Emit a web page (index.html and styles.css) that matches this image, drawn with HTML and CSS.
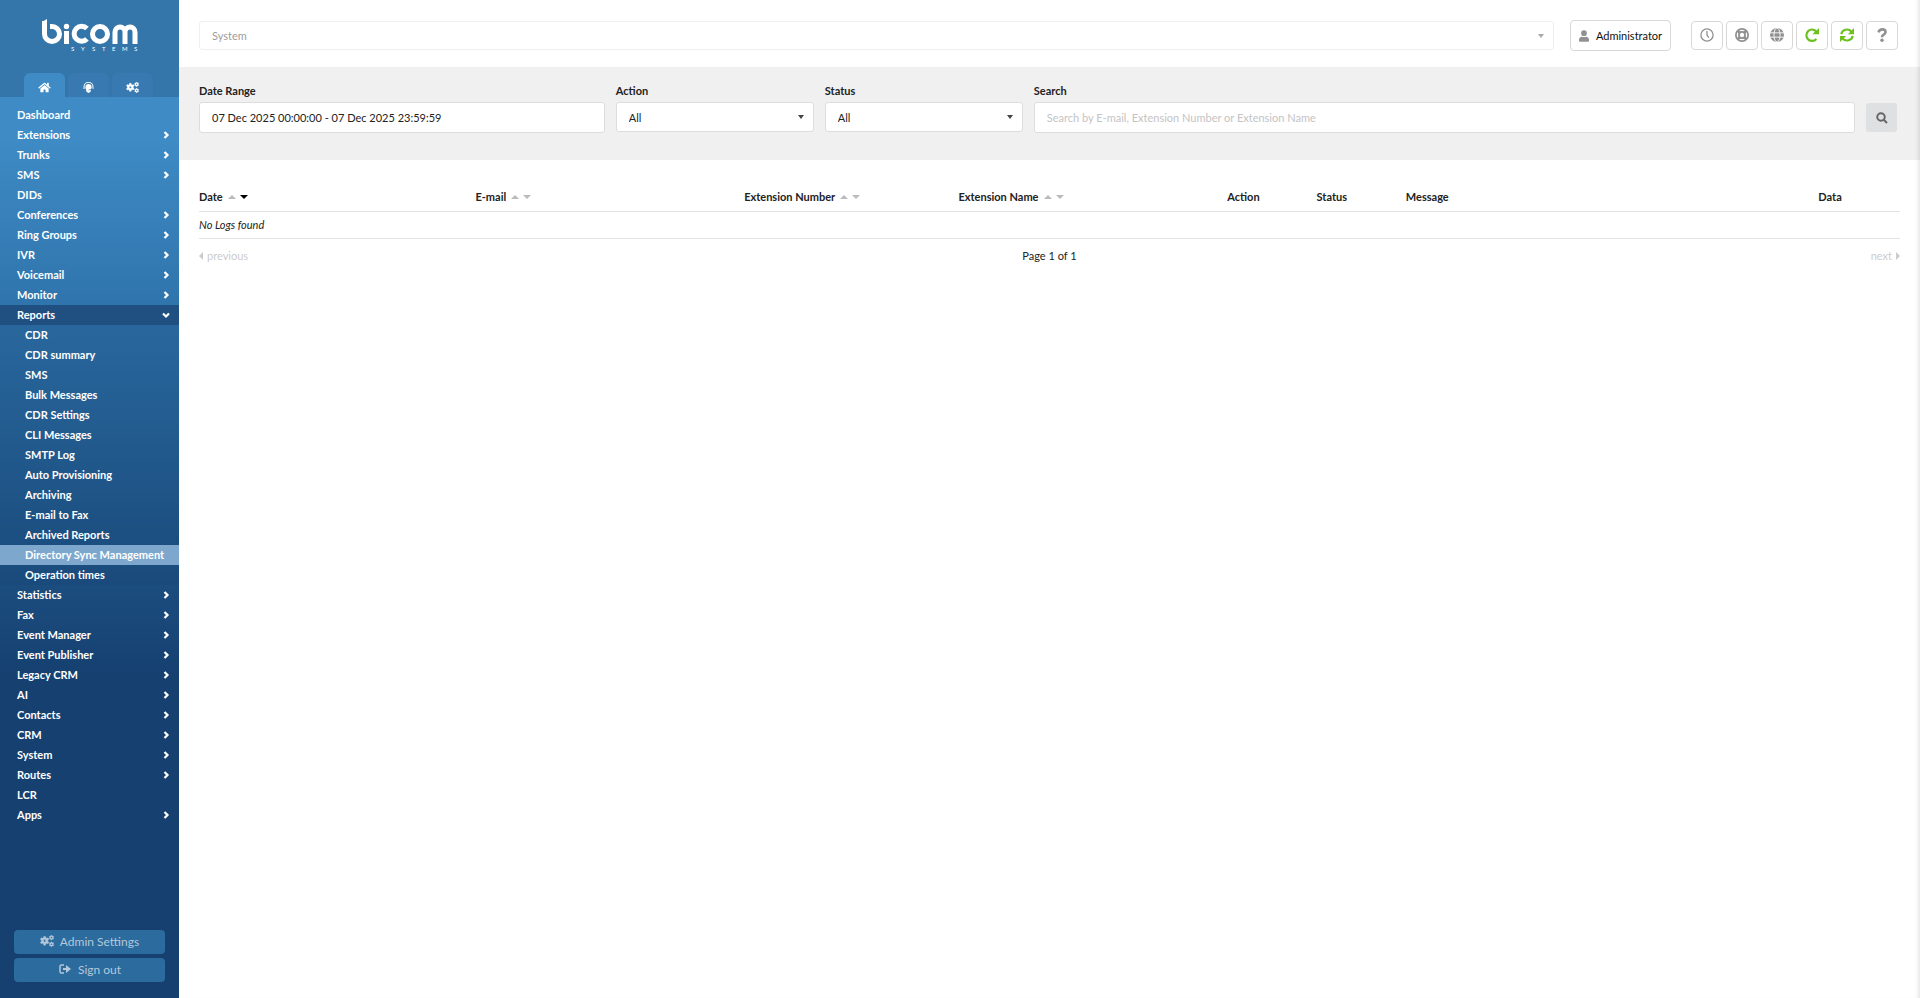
FILE: index.html
```html
<!DOCTYPE html>
<html lang="en">
<head>
    <meta charset="UTF-8">
    <meta name="viewport" content="width=device-width, initial-scale=1.0">
    <title>Directory Sync Management</title>
    <link rel="stylesheet" href="styles.css">
</head>
<body>
    <svg class="sprite" aria-hidden="true">
        <symbol id="cogs" viewBox="10 0 600 512">
            <path transform="translate(-31 -37) scale(1.150)" stroke="currentColor" stroke-width="16" fill-rule="evenodd" d="M176 84h64l10 52 34 19 50-17 32 55-40 35v38l40 35-32 55-50-17-34 19-10 52h-64l-10-52-34-19-50 17-32-55 40-35v-38l-40-35 32-55 50 17 34-19zM208 202a45 45 0 1 0 0 90a45 45 0 1 0 0-90z"/>
            <path stroke="currentColor" stroke-width="12" fill-rule="evenodd" d="M480 8h46l7 28 20 11 27-8 22 38-20 20v24l20 20-22 38-27-8-20 11-7 28h-46l-7-28-20-11-27 8-22-38 20-20V97l-20-20 22-38 27 8 20-11zM503 72a36 36 0 1 0 0 72a36 36 0 1 0 0-72zM480 294h46l7 28 20 11 27-8 22 38-20 20v24l20 20-22 38-27-8-20 11-7 28h-46l-7-28-20-11-27 8-22-38 20-20v-24l-20-20 22-38 27 8 20-11zM503 358a36 36 0 1 0 0 72a36 36 0 1 0 0-72z"/>
        </symbol>
        <symbol id="angle" viewBox="0 0 8 10">
            <path d="M2.500 2l3 3-3 3" fill="none" stroke="currentColor" stroke-width="2.200"/>
        </symbol>
    </svg>
    <div class="layout">
        <aside class="sidebar">
            <div class="brand">
                <svg class="logo" viewBox="0 0 96 34" role="img" aria-label="bicom systems">
                    <g fill="none" stroke="#fff" stroke-width="5">
                        <path d="M2.500 3V16a7.500 7.500 0 1 0 7.500-7.500H8"/>
                        <path d="M24.500 13V26"/>
                        <path d="M45 10.500A7.500 7.500 0 1 0 45 21"/>
                        <circle cx="58" cy="16" r="7.500"/>
                        <path d="M73 26V14a5 5 0 0 1 10 0V26M83 14a5 5 0 0 1 10 0V26"/>
                    </g>
                    <path d="M0 4L5 1V5H0z" fill="#fff"/>
                    <circle cx="24.500" cy="8.500" r="2.700" fill="#fff"/>
                    <g class="logo-sub">
                        <text x="29" y="33">S</text><text x="39" y="33">Y</text><text x="50" y="33">S</text><text x="60" y="33">T</text><text x="70" y="33">E</text><text x="80" y="33">M</text><text x="92" y="33">S</text>
                    </g>
                </svg>
            </div>
            <div class="tabs">
                <button type="button" class="tab active" aria-label="Home">
                    <svg viewBox="0 0 576 512"><path d="M280 148L96 300v164a16 16 0 0 0 16 16h112a16 16 0 0 0 16-16v-96a16 16 0 0 1 16-16h64a16 16 0 0 1 16 16v96a16 16 0 0 0 16 16h112a16 16 0 0 0 16-16V300L296 148a12 12 0 0 0-16 0zM572 251L488 182V44a12 12 0 0 0-12-12h-56a12 12 0 0 0-12 12v72l-90-74a48 48 0 0 0-61 0L4 251a12 12 0 0 0-1 17l25 31a12 12 0 0 0 17 2L280 107a12 12 0 0 1 16 0l235 194a12 12 0 0 0 17-2l25-31a12 12 0 0 0-1-17z"/></svg>
                </button>
                <button type="button" class="tab" aria-label="Operator">
                    <svg viewBox="0 0 16 16"><path d="M1.500 10V7a6.500 6.500 0 0 1 13 0v3" fill="none" stroke="currentColor" stroke-width="1.500"/><circle cx="8" cy="7.500" r="4.500"/><path d="M4 9h8l-1 5-3 2-3-2z"/><path d="M8 11.500c3 0 5-1 6-3" fill="none" stroke="#3779b0"/></svg>
                </button>
                <button type="button" class="tab" aria-label="Settings"><svg><use href="#cogs"/></svg></button>
            </div>
            <nav class="menu">
                <a href="#">Dashboard</a>
                <a href="#">Extensions<svg class="angle"><use href="#angle"/></svg></a>
                <a href="#">Trunks<svg class="angle"><use href="#angle"/></svg></a>
                <a href="#">SMS<svg class="angle"><use href="#angle"/></svg></a>
                <a href="#">DIDs</a>
                <a href="#">Conferences<svg class="angle"><use href="#angle"/></svg></a>
                <a href="#">Ring Groups<svg class="angle"><use href="#angle"/></svg></a>
                <a href="#">IVR<svg class="angle"><use href="#angle"/></svg></a>
                <a href="#">Voicemail<svg class="angle"><use href="#angle"/></svg></a>
                <a href="#">Monitor<svg class="angle"><use href="#angle"/></svg></a>
                <a href="#" class="open">Reports<svg class="angle"><use href="#angle"/></svg></a>
                <div class="submenu">
                    <a href="#">CDR</a>
                    <a href="#">CDR summary</a>
                    <a href="#">SMS</a>
                    <a href="#">Bulk Messages</a>
                    <a href="#">CDR Settings</a>
                    <a href="#">CLI Messages</a>
                    <a href="#">SMTP Log</a>
                    <a href="#">Auto Provisioning</a>
                    <a href="#">Archiving</a>
                    <a href="#">E-mail to Fax</a>
                    <a href="#">Archived Reports</a>
                    <a href="#" class="current">Directory Sync Management</a>
                    <a href="#">Operation times</a>
                </div>
                <a href="#">Statistics<svg class="angle"><use href="#angle"/></svg></a>
                <a href="#">Fax<svg class="angle"><use href="#angle"/></svg></a>
                <a href="#">Event Manager<svg class="angle"><use href="#angle"/></svg></a>
                <a href="#">Event Publisher<svg class="angle"><use href="#angle"/></svg></a>
                <a href="#">Legacy CRM<svg class="angle"><use href="#angle"/></svg></a>
                <a href="#">AI<svg class="angle"><use href="#angle"/></svg></a>
                <a href="#">Contacts<svg class="angle"><use href="#angle"/></svg></a>
                <a href="#">CRM<svg class="angle"><use href="#angle"/></svg></a>
                <a href="#">System<svg class="angle"><use href="#angle"/></svg></a>
                <a href="#">Routes<svg class="angle"><use href="#angle"/></svg></a>
                <a href="#">LCR</a>
                <a href="#">Apps<svg class="angle"><use href="#angle"/></svg></a>
            </nav>
            <div class="side-buttons">
                <button type="button"><svg><use href="#cogs"/></svg>Admin Settings</button>
                <button type="button"><svg viewBox="0 0 12 12"><path d="M5 2H2.500Q1 2 1 3.500V8.500Q1 10 2.500 10H5" fill="none" stroke="currentColor" stroke-width="1.500"/><path d="M4 5h3V2l5 4-5 4V7H4z"/></svg>Sign out</button>
            </div>
        </aside>

        <main class="content">
            <header class="topbar">
                <select class="system" aria-label="System">
                    <option>System</option>
                </select>
                <button type="button" class="admin">
                    <svg viewBox="0 0 448 512"><path d="M224 256a128 128 0 1 0 0-256a128 128 0 1 0 0 256zM314 288c-50 24-130 24-180 0C60 288 0 348 0 422v42a48 48 0 0 0 48 48h352a48 48 0 0 0 48-48v-42c0-74-60-134-134-134z"/></svg>Administrator
                </button>
                <div class="tools">
                    <button type="button" aria-label="Time"><svg viewBox="0 0 16 16"><g fill="none" stroke="currentColor" stroke-width="1.500"><circle cx="8" cy="8" r="7"/><path d="M8 3.500V8l2 3"/></g></svg></button>
                    <button type="button" aria-label="Support"><svg viewBox="0 0 16 16"><g fill="none" stroke="currentColor"><circle cx="8" cy="8" r="7" stroke-width="2"/><circle cx="8" cy="8" r="3.500" stroke-width="2"/><path d="M3 3l3 3M13 3l-3 3M3 13l3-3M13 13l-3-3" stroke-width="3"/></g></svg></button>
                    <button type="button" aria-label="Language"><svg viewBox="0 0 16 16"><circle cx="8" cy="8" r="8"/><g fill="none" stroke="#fff"><path d="M0 5.500h16M0 10.500h16"/><ellipse cx="8" cy="8" rx="3.500" ry="8"/></g></svg></button>
                    <button type="button" class="green" aria-label="Reload"><svg viewBox="0 0 16 16"><path d="M13 4A6.500 6.500 0 1 0 13 12.500" fill="none" stroke="currentColor" stroke-width="2.500"/><path d="M16 0v7H8.500l2.500-2.500L13.500 2.500z"/></svg></button>
                    <button type="button" class="green" aria-label="Refresh"><svg viewBox="0 0 16 16"><path d="M1.500 7A6.500 6 0 0 1 13 4M14.500 9A6.500 6 0 0 1 3 12" fill="none" stroke="currentColor" stroke-width="2.500"/><path d="M16 0v7H9zM0 16V9h7z"/></svg></button>
                    <button type="button" aria-label="Help"><svg viewBox="0 0 16 16"><path d="M4 5Q5 1.500 8.500 1.500Q12 1.500 12 4.500Q12 6.500 10 7.500Q8 8.500 8 10.500" fill="none" stroke="currentColor" stroke-width="3"/><circle cx="8" cy="14" r="2"/></svg></button>
                </div>
            </header>

            <form class="filters">
                <div class="field date">
                    <label for="dateRange">Date Range</label>
                    <input type="text" id="dateRange" value="07 Dec 2025 00:00:00 - 07 Dec 2025 23:59:59">
                </div>
                <div class="field pick">
                    <label for="action">Action</label>
                    <select id="action"><option>All</option></select>
                </div>
                <div class="field pick">
                    <label for="status">Status</label>
                    <select id="status"><option>All</option></select>
                </div>
                <div class="field search">
                    <label for="search">Search</label>
                    <input type="text" id="search" placeholder="Search by E-mail, Extension Number or Extension Name">
                </div>
                <button type="button" class="find" aria-label="Search"><svg viewBox="0 0 12 12"><circle cx="5" cy="5" r="3.750" fill="none" stroke="currentColor" stroke-width="2"/><path d="M7.500 7.500l3.500 3.500" stroke="currentColor" stroke-width="2"/></svg></button>
            </form>

            <section class="logs">
                <table>
                    <thead>
                        <tr>
                            <th class="c-date">Date<i class="up"></i><i class="down on"></i></th>
                            <th class="c-mail">E-mail<i class="up"></i><i class="down"></i></th>
                            <th class="c-number">Extension Number<i class="up"></i><i class="down"></i></th>
                            <th class="c-name">Extension Name<i class="up"></i><i class="down"></i></th>
                            <th class="c-short">Action</th>
                            <th class="c-short">Status</th>
                            <th>Message</th>
                            <th class="c-data">Data</th>
                        </tr>
                    </thead>
                    <tbody>
                        <tr><td colspan="8">No Logs found</td></tr>
                    </tbody>
                </table>
                <div class="pager">
                    <span class="off"><i class="left"></i>previous</span>
                    <span>Page 1 of 1</span>
                    <span class="off next">next<i class="right"></i></span>
                </div>
            </section>
        </main>
    </div>
</body>
</html>
```

FILE: styles.css
```css
* {
    box-sizing: border-box;
}
body {
    margin: 0;
    font-family: Lato, "Liberation Sans", sans-serif;
    font-size: 11px;
    line-height: 16px;
    color: #222;
    background-color: #fff;
}
button, input, select {
    font-family: inherit;
    font-size: 11px;
}
button {
    cursor: pointer;
}
svg {
    fill: currentColor;
}
.sprite {
    display: none;
}
.layout {
    display: flex;
    min-height: 100vh;
}

/* sidebar */
.sidebar {
    width: 179px;
    flex: none;
    display: flex;
    flex-direction: column;
    background: #154070;
}
.brand {
    height: 73px;
    padding: 18px 0 0 42px;
    background: #3576aa;
}
.logo {
    display: block;
    width: 96px;
    height: 34px;
}
.logo-sub {
    font-size: 6px;
    fill: #fff;
}
.tabs {
    display: flex;
    gap: 3px;
    padding: 0 24px;
    background: #3576aa;
}
.tab {
    width: 41px;
    height: 24px;
    padding: 4px 0 0;
    border: none;
    border-radius: 6px 6px 0 0;
    background: #3779b0;
    color: #fff;
}
.tab.active {
    background: #3e8bc5;
}
.tab svg {
    display: block;
    width: 13px;
    height: 11px;
    margin: 0 auto;
}
.menu {
    flex: 1;
    padding-top: 8px;
    background: linear-gradient(#3e8bc5 0, #3e8bc5 40px, #2f73ab 215px, #154070 580px);
}
.menu a {
    display: flex;
    align-items: center;
    justify-content: space-between;
    height: 20px;
    padding: 0 9px 0 17px;
    color: #fff;
    font-weight: bold;
    text-decoration: none;
    white-space: nowrap;
}
.menu .open {
    background: #205082;
}
.angle {
    width: 8px;
    height: 10px;
}
.open .angle {
    transform: rotate(90deg);
}
.submenu {
    background: rgba(21, 64, 112, 0.2);
}
.menu .submenu a {
    padding-left: 25px;
}
.submenu .current {
    background: #7ea7cd;
}
.side-buttons {
    display: flex;
    flex-direction: column;
    gap: 4px;
    padding: 0 14px 16px;
}
.side-buttons button {
    display: flex;
    align-items: center;
    justify-content: center;
    gap: 6px;
    height: 24px;
    padding: 0 0 2px;
    border: none;
    border-radius: 4px;
    background: #2b6b9d;
    color: #b5c8da;
    font-size: 12px;
}
.side-buttons svg {
    width: 14px;
    height: 12px;
}

/* top bar */
.content {
    flex: 1;
    min-width: 0;
    box-shadow: inset -5px 0 5px -4px #ddd;
}
.topbar {
    display: flex;
    align-items: center;
    height: 67px;
    padding: 4px 22px 0 20px;
}
select {
    appearance: none;
    height: 30px;
    padding: 0 12px;
    border: 1px solid #ddd;
    border-radius: 3px;
    color: #222;
    background: #fff url("data:image/svg+xml,%3Csvg xmlns='http://www.w3.org/2000/svg' width='6' height='4'%3E%3Cpath d='M0 0h6L3 4z' fill='%23444'/%3E%3C/svg%3E") no-repeat right 9px top 12px;
}
.system {
    flex: 1;
    height: 29px;
    opacity: 0.45;
}
.admin {
    display: flex;
    align-items: center;
    justify-content: center;
    gap: 7px;
    width: 101px;
    height: 31px;
    margin: 0 20px 0 16px;
    padding: 0;
    border: 1px solid #d8d8d8;
    border-radius: 4px;
    background: #fff;
    color: #111;
}
.admin svg {
    width: 10px;
    height: 12px;
    color: #919191;
}
.tools {
    display: flex;
    gap: 3px;
}
.tools button {
    display: flex;
    align-items: center;
    justify-content: center;
    width: 32px;
    height: 29px;
    padding: 0 0 2px;
    border: 1px solid #d8d8d8;
    border-radius: 4px;
    background: #fff;
    color: #919191;
}
.tools svg {
    width: 14px;
    height: 14px;
}
.tools .green {
    color: #6dc01e;
}

/* filters */
.filters {
    display: flex;
    align-items: flex-start;
    gap: 11px;
    height: 93px;
    padding: 16px 23px 0 20px;
    background: rgba(0, 0, 0, 0.06);
}
.field label {
    display: block;
    margin-bottom: 3px;
    font-weight: bold;
}
.field input, .field select {
    display: block;
    width: 100%;
}
.field input {
    height: 31px;
    padding: 0 12px;
    border: 1px solid #ddd;
    border-radius: 3px;
    color: #222;
}
.field input::placeholder {
    color: #c4c4c4;
}
.date {
    width: 23.9%;
}
.pick {
    width: 198px;
}
.search {
    flex: 1;
}
.find {
    width: 31px;
    height: 29px;
    margin-top: 20px;
    padding: 0;
    border: none;
    border-radius: 3px;
    background: #dfe0e1;
    color: #666;
}
.find svg {
    display: block;
    width: 12px;
    height: 12px;
    margin: 0 auto;
}

/* log table */
.logs {
    padding: 23px 20px 0;
}
table {
    width: 100%;
    table-layout: fixed;
    border-collapse: collapse;
}
th, td {
    height: 27px;
    padding: 0;
    border-bottom: 1px solid #e3e3e3;
    text-align: left;
}
th {
    height: 28px;
    white-space: nowrap;
}
td {
    font-style: italic;
}
.c-date {
    width: 16.25%;
}
.c-mail, .c-name {
    width: 15.8%;
}
.c-number {
    width: 12.6%;
}
.c-short {
    width: 5.25%;
}
.c-data {
    width: 4.8%;
}
i {
    display: inline-block;
    border: 4px solid transparent;
}
.up {
    margin: 0 4px 2px 5px;
    border-top: none;
    border-bottom-color: #bbb;
}
.down {
    margin-bottom: 2px;
    border-bottom: none;
    border-top-color: #bbb;
}
.down.on {
    border-top-color: #000;
}
.left {
    margin-right: 4px;
    border-left: none;
    border-right-color: #ccc;
}
.right {
    margin-left: 4px;
    border-right: none;
    border-left-color: #ccc;
}
.pager {
    display: grid;
    grid-template-columns: 1fr auto 1fr;
    padding-top: 9px;
}
.off {
    color: #ccc;
}
.next {
    text-align: right;
}
```
